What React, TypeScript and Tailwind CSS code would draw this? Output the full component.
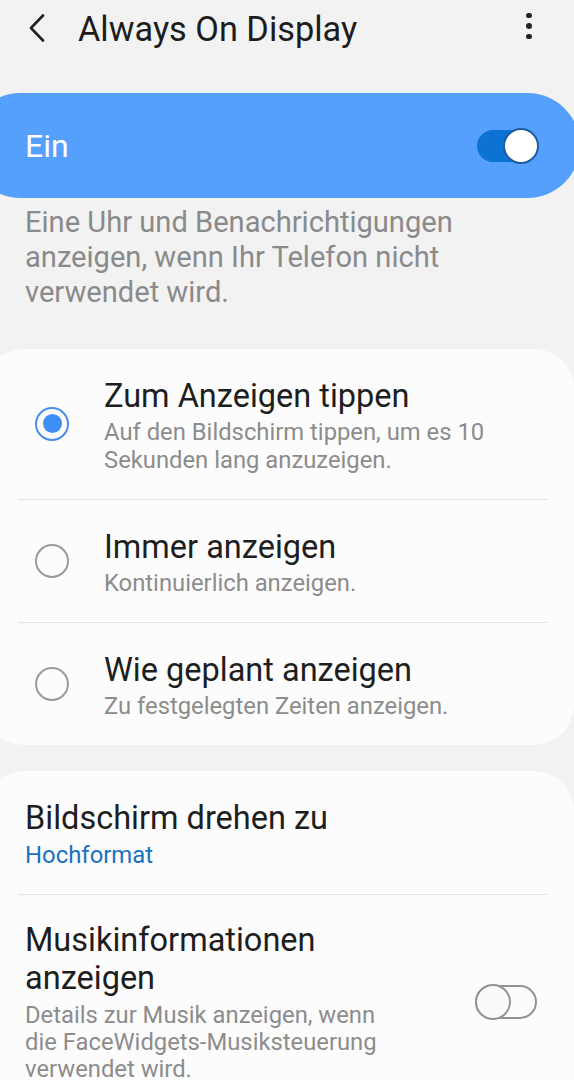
import React from "react";

function Radio({ checked }: { checked: boolean }) {
  return checked ? (
    <div className="w-[34px] h-[34px] rounded-full border-[2px] border-[#4a8fe6] flex items-center justify-center shrink-0">
      <div className="w-[19px] h-[19px] rounded-full bg-[#3f8ef5]" />
    </div>
  ) : (
    <div className="w-[34px] h-[34px] rounded-full border-[2px] border-[#9a9a9a] shrink-0" />
  );
}

function Option({
  checked,
  title,
  sub,
  divider,
}: {
  checked: boolean;
  title: string;
  sub: string;
  divider: boolean;
}) {
  return (
    <div>
      <div className="flex items-center pt-[29px] pb-[25px]">
        <div className="w-[120px] flex justify-end pr-[35px] -mt-[5px]">
          <Radio checked={checked} />
        </div>
        <div className="flex-1 pr-[60px]">
          <div className="text-[32.5px] leading-[36px] text-[#1e1e1e]">{title}</div>
          <div className="mt-[4px] text-[23.8px] leading-[28px] text-[#8c8c8c]">{sub}</div>
        </div>
      </div>
      {divider && <div className="ml-[34px] mr-[26px] h-px bg-[#e2e2e2]" />}
    </div>
  );
}

export default function App() {
  return (
    <div
      className="w-[574px] h-[1080px] overflow-hidden bg-[#f2f2f2]"
      style={{ fontFamily: "Roboto, 'Noto Sans', sans-serif" }}
    >
      {/* Header */}
      <div className="h-[56px] flex items-center relative">
        <div className="w-[78px] flex justify-start pl-[27px]">
          <svg width="20" height="28" viewBox="0 0 20 28" fill="none">
            <path d="M16 1.5 L4 14 L16 26.5" stroke="#222" strokeWidth="2.6" strokeLinecap="round" strokeLinejoin="round" />
          </svg>
        </div>
        <div className="flex-1 text-[34.3px] leading-[40px] text-[#1c1c1c] mt-[1px]">Always On Display</div>
        <div className="w-[40px] flex flex-col items-center gap-[5px] mr-[25px] -mt-[4px]">
          <div className="w-[5.5px] h-[5.5px] rounded-full bg-[#222]" />
          <div className="w-[5.5px] h-[5.5px] rounded-full bg-[#222]" />
          <div className="w-[5.5px] h-[5.5px] rounded-full bg-[#222]" />
        </div>
      </div>

      {/* Banner */}
      <div className="mt-[37px] ml-[-32px] mr-[-6px] h-[105px] rounded-full bg-[#55a0fc] flex items-center pl-[57px] pr-[43px]">
        <div className="flex-1 text-[32px] text-white">Ein</div>
        <div className="relative w-[60px] h-[32px] rounded-full bg-[#0c72d3]">
          <div className="absolute right-[-2px] top-[-2px] w-[36px] h-[36px] rounded-full bg-white border-[2px] border-[#1d5c9e]" />
        </div>
      </div>

      {/* Description */}
      <div className="mt-[7px] pl-[25px] pr-[90px] text-[29.1px] leading-[35px] text-[#8a8a8a]">
        Eine Uhr und Benachrichtigungen anzeigen, wenn Ihr Telefon nicht verwendet wird.
      </div>

      {/* Card 1 */}
      <div className="mt-[39px] ml-[-16px] rounded-[40px] bg-[#fcfcfc]">
        <Option
          checked
          title="Zum Anzeigen tippen"
          sub="Auf den Bildschirm tippen, um es 10 Sekunden lang anzuzeigen."
          divider
        />
        <Option checked={false} title="Immer anzeigen" sub="Kontinuierlich anzeigen." divider />
        <Option checked={false} title="Wie geplant anzeigen" sub="Zu festgelegten Zeiten anzeigen." divider={false} />
      </div>

      {/* Card 2 */}
      <div className="mt-[26px] ml-[-16px] rounded-[40px] bg-[#fcfcfc] pb-[40px]">
        <div className="pl-[41px] pt-[29px] pb-[25px]">
          <div className="text-[32.5px] leading-[36px] text-[#1e1e1e]">Bildschirm drehen zu</div>
          <div className="mt-[5px] text-[23.9px] leading-[28px] text-[#1a72c4]">Hochformat</div>
        </div>
        <div className="ml-[34px] mr-[26px] h-px bg-[#e2e2e2]" />
        <div className="flex items-center pl-[41px] pr-[37px] pt-[26px]">
          <div className="flex-1 pr-[90px]">
            <div className="text-[32.5px] leading-[38px] text-[#1e1e1e]">Musikinformationen anzeigen</div>
            <div className="mt-[5px] text-[23.8px] leading-[27px] text-[#8c8c8c]">
              Details zur Musik anzeigen, wenn die FaceWidgets-Musiksteuerung verwendet wird.
            </div>
          </div>
          <div className="relative w-[62px] h-[34px] rounded-full border-[2px] border-[#939393]">
            <div className="absolute left-[-2px] top-[-3px] w-[36px] h-[36px] rounded-full bg-[#fafafa] border-[2px] border-[#939393]" />
          </div>
        </div>
      </div>
    </div>
  );
}
